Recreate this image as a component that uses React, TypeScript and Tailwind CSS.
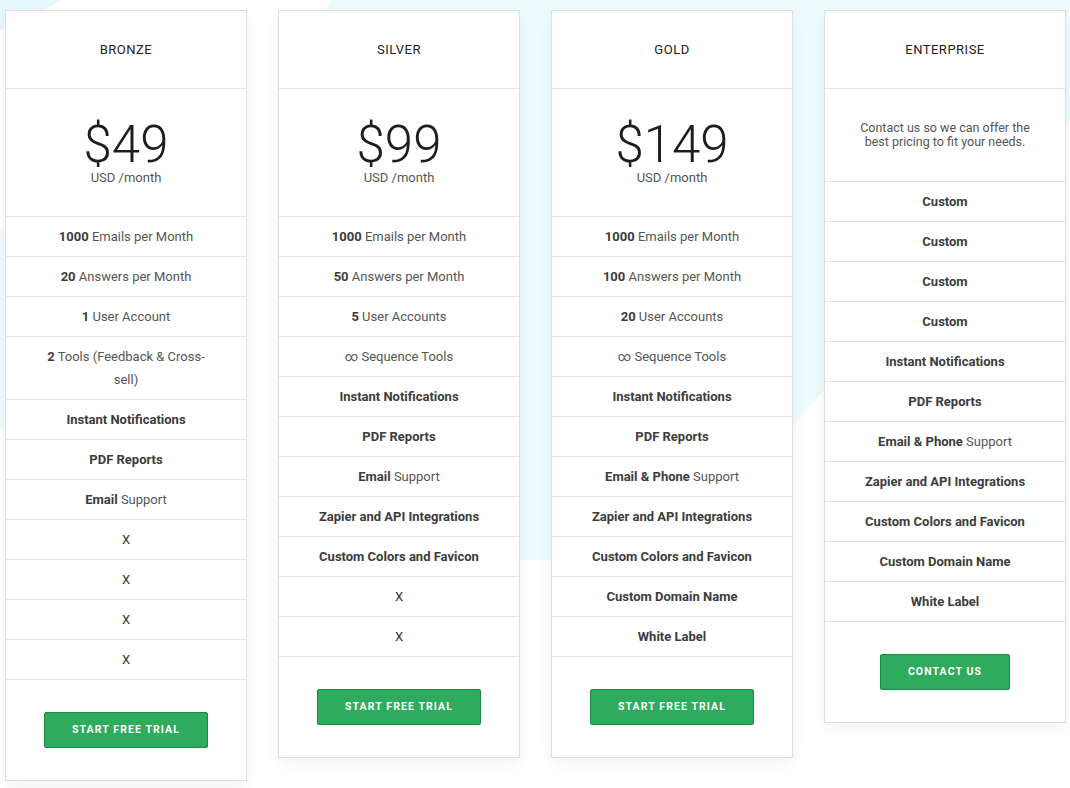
import type { ReactNode } from 'react';

type Plan = {
  name: string;
  price?: string;
  note?: string;
  features: ReactNode[];
  cta: string;
};

const B = ({ children }: { children: ReactNode }) => (
  <span className="font-bold text-[#3c3c3c]">{children}</span>
);

const PLANS: Plan[] = [
  {
    name: 'BRONZE',
    price: '$49',
    features: [
      <><B>1000</B> Emails per Month</>,
      <><B>20</B> Answers per Month</>,
      <><B>1</B> User Account</>,
      <><B>2</B> Tools (Feedback &amp; Cross-sell)</>,
      <B>Instant Notifications</B>,
      <B>PDF Reports</B>,
      <><B>Email</B> Support</>,
      'X',
      'X',
      'X',
      'X',
    ],
    cta: 'START FREE TRIAL',
  },
  {
    name: 'SILVER',
    price: '$99',
    features: [
      <><B>1000</B> Emails per Month</>,
      <><B>50</B> Answers per Month</>,
      <><B>5</B> User Accounts</>,
      <>∞ Sequence Tools</>,
      <B>Instant Notifications</B>,
      <B>PDF Reports</B>,
      <><B>Email</B> Support</>,
      <B>Zapier and API Integrations</B>,
      <B>Custom Colors and Favicon</B>,
      'X',
      'X',
    ],
    cta: 'START FREE TRIAL',
  },
  {
    name: 'GOLD',
    price: '$149',
    features: [
      <><B>1000</B> Emails per Month</>,
      <><B>100</B> Answers per Month</>,
      <><B>20</B> User Accounts</>,
      <>∞ Sequence Tools</>,
      <B>Instant Notifications</B>,
      <B>PDF Reports</B>,
      <><B>Email &amp; Phone</B> Support</>,
      <B>Zapier and API Integrations</B>,
      <B>Custom Colors and Favicon</B>,
      <B>Custom Domain Name</B>,
      <B>White Label</B>,
    ],
    cta: 'START FREE TRIAL',
  },
  {
    name: 'ENTERPRISE',
    note: 'Contact us so we can offer the best pricing to fit your needs.',
    features: [
      <B>Custom</B>,
      <B>Custom</B>,
      <B>Custom</B>,
      <B>Custom</B>,
      <B>Instant Notifications</B>,
      <B>PDF Reports</B>,
      <><B>Email &amp; Phone</B> Support</>,
      <B>Zapier and API Integrations</B>,
      <B>Custom Colors and Favicon</B>,
      <B>Custom Domain Name</B>,
      <B>White Label</B>,
    ],
    cta: 'CONTACT US',
  },
];

function PlanCard({ plan }: { plan: Plan }) {
  return (
    <div className="w-[242px] shrink-0 border border-[#dedede] bg-white shadow-[0_6px_14px_rgba(0,0,0,0.05)]">
      <div className="flex h-[77px] items-center justify-center text-[13px] tracking-[0.5px] text-[#222]">
        {plan.name}
      </div>

      {plan.price ? (
        <div className="flex h-[128px] flex-col items-center border-t border-[#e4e4e4] pt-[33px]">
          <div className="text-[51px] font-light leading-[46px] text-[#1d1d1d]">{plan.price}</div>
          <div className="mt-[3px] text-[13px] leading-[14px] text-[#555]">USD /month</div>
        </div>
      ) : (
        <div className="flex h-[93px] items-center justify-center border-t border-[#e4e4e4] px-[26px] text-center text-[12.5px] leading-[14px] text-[#555]">
          {plan.note}
        </div>
      )}

      {plan.features.map((f, i) => (
        <div
          key={i}
          className="border-t border-[#e4e4e4] px-[32px] py-2 text-center text-[13px] leading-[23px] text-[#555]"
        >
          {f === 'X' ? <span className="text-[#333]">X</span> : f}
        </div>
      ))}

      <div className="flex justify-center border-t border-[#e4e4e4] py-8">
        <button
          type="button"
          className="h-[36px] rounded-[2px] border border-[#1b8a44] bg-[#2eab5d] px-[27px] text-[10.5px] font-bold tracking-[1.1px] text-white"
        >
          {plan.cta}
        </button>
      </div>
    </div>
  );
}

export default function App() {
  return (
    <div
      className="relative min-h-[788px] w-[1070px] overflow-hidden bg-white"
      style={{ fontFamily: 'Roboto, "Liberation Sans", sans-serif' }}
    >
      {/* faint background shapes */}
      <svg className="pointer-events-none absolute left-0 top-0" width="1070" height="560" viewBox="0 0 1070 560">
        <path d="M330 0 L1070 0 L1070 120 L900 300 L790 430 L560 560 L500 560 L520 300 L300 60 Z" fill="#eefbfc" />
        <path d="M0 0 L60 0 L30 20 L0 30 Z" fill="#e6f8fb" />
        <path d="M0 230 L20 220 L20 420 L0 430 Z" fill="#f1fbfd" />
      </svg>
      <div className="relative flex items-start gap-[31px] pl-[5px] pt-[10px]">
        {PLANS.map((p) => (
          <PlanCard key={p.name} plan={p} />
        ))}
      </div>
    </div>
  );
}
